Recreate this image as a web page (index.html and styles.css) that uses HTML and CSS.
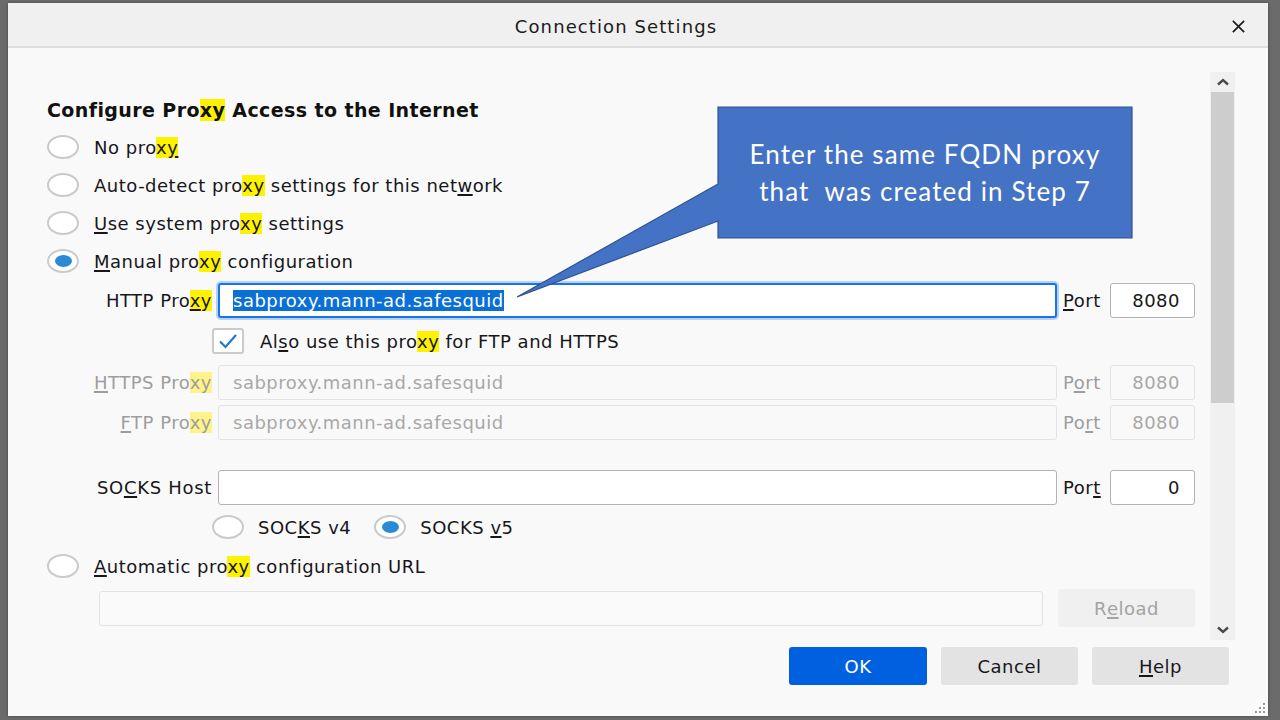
FILE: index.html
```html
<!DOCTYPE html>
<html>
<head>
<meta charset="utf-8">
<link rel="stylesheet" href="styles.css">
</head>
<body>
<div class="dialog">
  <div class="titlebar">
    <div class="title">Connection Settings</div>
    <svg class="close" viewBox="0 0 16 16"><path d="M2 2 L14 14 M14 2 L2 14" stroke="#1b1b1b" stroke-width="1.8" fill="none"/></svg>
  </div>
  <div class="main">
    <div class="content">
      <div class="heading"><span>Configure Pro<mark>xy</mark> Access to the Internet</span></div>
      <div class="radio-row"><span class="radio"></span><span>No pro<mark>x<u>y</u></mark></span></div>
      <div class="radio-row"><span class="radio"></span><span>Auto-detect pro<mark>xy</mark> settings for this net<u>w</u>ork</span></div>
      <div class="radio-row"><span class="radio"></span><span><u>U</u>se system pro<mark>xy</mark> settings</span></div>
      <div class="radio-row"><span class="radio on"></span><span><u>M</u>anual pro<mark>xy</mark> configuration</span></div>

      <div class="field-row">
        <span class="flabel">HTTP Pro<mark><u>x</u>y</mark></span>
        <div class="input focus"><span class="sel">sabproxy.mann-ad.safesquid</span></div>
        <span class="plabel"><u>P</u>ort</span>
        <div class="input port">8080</div>
      </div>
      <div class="check-row">
        <span class="checkbox"><svg viewBox="0 0 28 22"><path d="M6 11.5 L11.5 17 L22 5" stroke="#1f75d6" stroke-width="2.2" fill="none"/></svg></span>
        <span>Al<u>s</u>o use this pro<mark>xy</mark> for FTP and HTTPS</span>
      </div>
      <div class="field-row disabled">
        <span class="flabel"><u>H</u>TTPS Pro<mark>xy</mark></span>
        <div class="input">sabproxy.mann-ad.safesquid</div>
        <span class="plabel">P<u>o</u>rt</span>
        <div class="input port">8080</div>
      </div>
      <div class="field-row disabled">
        <span class="flabel"><u>F</u>TP Pro<mark>xy</mark></span>
        <div class="input">sabproxy.mann-ad.safesquid</div>
        <span class="plabel">Po<u>r</u>t</span>
        <div class="input port">8080</div>
      </div>
      <div class="field-row socks">
        <span class="flabel">SO<u>C</u>KS Host</span>
        <div class="input"></div>
        <span class="plabel">Por<u>t</u></span>
        <div class="input port">0</div>
      </div>
      <div class="version-row">
        <span class="radio"></span><span class="vlabel">SOC<u>K</u>S v4</span>
        <span class="radio on v5"></span><span class="vlabel">SOCKS <u>v</u>5</span>
      </div>
      <div class="radio-row"><span class="radio"></span><span><u>A</u>utomatic pro<mark>xy</mark> configuration URL</span></div>
      <div class="url-row">
        <div class="input url"></div>
        <div class="btn reload">R<u>e</u>load</div>
      </div>
    </div>
    <div class="scrollbar">
      <div class="sb-btn"><svg viewBox="0 0 14 8"><path d="M2 6.5 L7 2 L12 6.5" stroke="#4a4a4a" stroke-width="2.4" fill="none"/></svg></div>
      <div class="sb-thumb"></div>
      <div class="sb-track"></div>
      <div class="sb-btn"><svg viewBox="0 0 14 8"><path d="M2 1.5 L7 6 L12 1.5" stroke="#4a4a4a" stroke-width="2.4" fill="none"/></svg></div>
    </div>
  </div>
  <div class="footer">
    <div class="btn primary">OK</div>
    <div class="btn">Cancel</div>
    <div class="btn"><u>H</u>elp</div>
  </div>
</div>

<svg class="callout-shape" viewBox="0 0 1280 720">
  <path d="M718 107 H1132 V238 H718 V221 L517 297 L718 184 Z" fill="#4472c4" stroke="#2f528f" stroke-width="1.2"/>
</svg>
<div class="callout-text">Enter the same FQDN proxy<br>that&nbsp; was created in Step 7</div>

<svg class="grip" viewBox="0 0 12 12">
  <g fill="#9a9a9a"><rect x="9" y="1" width="2" height="2"/><rect x="5" y="5" width="2" height="2"/><rect x="9" y="5" width="2" height="2"/><rect x="1" y="9" width="2" height="2"/><rect x="5" y="9" width="2" height="2"/><rect x="9" y="9" width="2" height="2"/></g>
</svg>
</body>
</html>
```

FILE: styles.css
```css
* { box-sizing: border-box; }
html, body { margin: 0; padding: 0; }
body {
  width: 1280px;
  height: 720px;
  overflow: hidden;
  position: relative;
  background: #6b6b6b;
  font-family: "DejaVu Sans", sans-serif;
  font-size: 18px;
  letter-spacing: 0.5px;
  color: #17161b;
}
mark { background: #fff200; color: inherit; }
u { text-decoration-thickness: 1.5px; text-underline-offset: 2px; }

.dialog {
  margin: 3px 0 0 8px;
  width: 1260px;
  height: 713px;
  background: #f9f9f9;
  display: flex;
  flex-direction: column;
  box-shadow: 0 0 3px rgba(0,0,0,0.35);
}
.titlebar {
  height: 45px;
  flex: none;
  background: #f0f0f0;
  border-bottom: 2px solid #dddddd;
  display: grid;
  grid-template-columns: 1fr auto 1fr;
  align-items: center;
  padding-top: 3px;
}
.title {
  grid-column: 2;
  margin-right: 44px;
  font-size: 18px;
  letter-spacing: 1.1px;
  color: #1b1b1b;
}
.close {
  grid-column: 3;
  justify-self: end;
  margin-right: 22px;
  width: 15px;
  height: 15px;
}

.main { height: 592px; flex: none; display: flex; }
.content { flex: 1; padding: 43px 15px 0 39px; }

.heading {
  height: 37px;
  display: flex;
  align-items: center;
  font-weight: bold;
  font-size: 19px;
  letter-spacing: 0.4px;
  color: #111;
}
.radio-row { height: 38px; display: flex; align-items: center; gap: 15px; }
.radio {
  flex: none;
  width: 32px;
  height: 24px;
  border-radius: 50%;
  border: 2px solid #cacaca;
  background: #fff;
  display: grid;
  place-items: center;
}
.radio.on::after {
  content: "";
  width: 17px;
  height: 12px;
  border-radius: 50%;
  background: #2a8ad6;
}

.field-row { height: 40px; display: flex; align-items: center; }
.field-row.socks { margin-top: 25px; }
.flabel { width: 165px; flex: none; text-align: right; }
.field-row.socks .flabel { letter-spacing: 0.7px; }
.plabel { width: 40px; flex: none; margin-left: 6px; }
.input {
  height: 35px;
  background: #fff;
  border: 1px solid #b3b3b3;
  border-radius: 3px;
  display: flex;
  align-items: center;
  padding-left: 14px;
  white-space: nowrap;
}
.field-row .input { flex: 1; margin-left: 6px; }
.field-row .input.port {
  flex: none;
  width: 85px;
  margin-left: 7px;
  justify-content: flex-end;
  padding: 0 14px 0 0;
}
.input.focus {
  border: 2px solid #1a73e8;
  box-shadow: 0 0 0 2px #b3d4f7;
  padding-left: 13px;
}
.sel { background: #0a6fd6; color: #fff; }

.disabled { color: #9d9d9d; }
.disabled mark { background: #fdf38a; }
.disabled .input { border-color: #e3e3e3; background: #f9f9f9; color: #a8a8a8; }

.check-row { height: 42px; display: flex; align-items: center; padding-left: 165px; }
.checkbox {
  width: 32px;
  height: 26px;
  border: 2px solid #cacaca;
  border-radius: 3px;
  background: #fff;
  display: grid;
  place-items: center;
  margin-right: 16px;
}
.checkbox svg { width: 28px; height: 22px; }

.version-row { height: 40px; display: flex; align-items: center; padding-left: 165px; }
.vlabel { margin-left: 14px; }
.radio.v5 { margin-left: 23px; }

.url-row { height: 40px; margin-top: 3px; display: flex; align-items: center; padding-left: 52px; }
.input.url { flex: 1; border-color: #e3e3e3; background: #fafafa; }
.btn {
  width: 137px;
  height: 38px;
  border-radius: 3px;
  background: #e3e3e3;
  display: flex;
  align-items: center;
  justify-content: center;
  color: #17161b;
}
.btn.reload { margin-left: 15px; background: #f0f0f0; color: #a3a3a3; }
.btn.primary { width: 138px; background: #0061e0; color: #fff; }

.scrollbar {
  width: 25px;
  height: 568px;
  margin: 24px 33px 0 0;
  background: #f0f0f0;
  display: flex;
  flex-direction: column;
}
.sb-btn { height: 20px; flex: none; display: grid; place-items: center; }
.sb-btn svg { width: 14px; height: 8px; }
.sb-thumb { height: 311px; flex: none; margin: 0 1px; background: #cdcdcd; }
.sb-track { flex: 1; }

.footer {
  flex: 1;
  display: flex;
  justify-content: flex-end;
  gap: 14px;
  padding: 7px 39px 0 0;
}

.callout-shape {
  position: absolute;
  left: 0;
  top: 0;
  width: 1280px;
  height: 720px;
  pointer-events: none;
}
.callout-text {
  position: absolute;
  left: 718px;
  top: 107px;
  width: 414px;
  height: 131px;
  display: flex;
  align-items: center;
  justify-content: center;
  text-align: center;
  font-family: Lato, "Open Sans", sans-serif;
  font-size: 26px;
  letter-spacing: 1.1px;
  line-height: 37px;
  color: #fff;
}
.grip {
  position: absolute;
  left: 1254px;
  top: 702px;
  width: 12px;
  height: 12px;
}
```
